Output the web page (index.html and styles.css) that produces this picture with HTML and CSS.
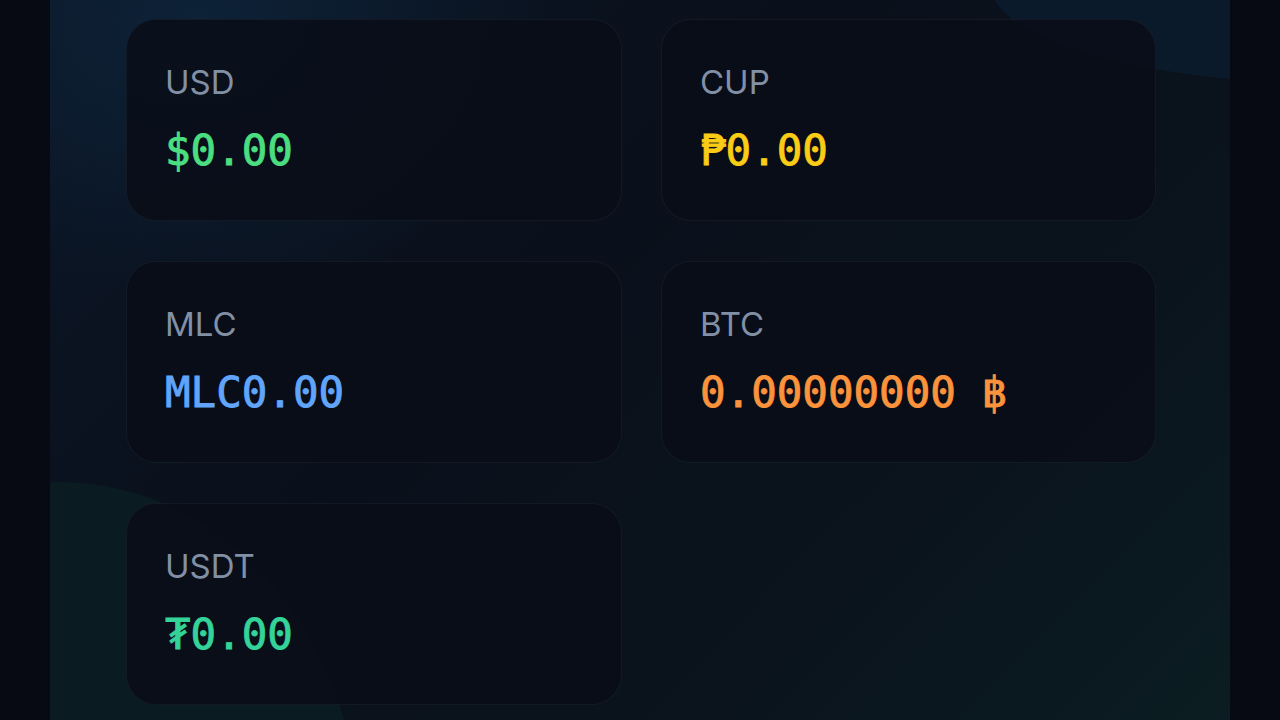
FILE: index.html
```html
<!DOCTYPE html>
<html lang="en">
<head>
<meta charset="utf-8">
<title>Balances</title>
<link rel="stylesheet" href="styles.css">
</head>
<body>
<main class="panel">
  <div class="blob blob-tl"></div>
  <div class="blob blob-tr"></div>
  <div class="blob blob-bl"></div>
  <section class="grid">
    <div class="card">
      <div class="label">USD</div>
      <div class="value usd">$0.00</div>
    </div>
    <div class="card">
      <div class="label">CUP</div>
      <div class="value cup">₱0.00</div>
    </div>
    <div class="card">
      <div class="label">MLC</div>
      <div class="value mlc">MLC0.00</div>
    </div>
    <div class="card">
      <div class="label">BTC</div>
      <div class="value btc">0.00000000 ฿</div>
    </div>
    <div class="card">
      <div class="label">USDT</div>
      <div class="value usdt">₮0.00</div>
    </div>
  </section>
</main>
</body>
</html>
```
FILE: styles.css
```css
html, body {
  margin: 0;
  padding: 0;
  height: 100%;
}
body {
  background: #070a12;
  font-family: Inter, "Liberation Sans", sans-serif;
  overflow: hidden;
}
.panel {
  position: relative;
  margin: 0 50px;
  height: 720px;
  overflow: hidden;
  background: linear-gradient(135deg, #0b1626 0%, #0a101b 40%, #0a141d 75%, #0b1d22 100%);
}
.blob {
  position: absolute;
  border-radius: 50%;
  pointer-events: none;
}
.blob-tl {
  left: -200px;
  top: -260px;
  width: 700px;
  height: 560px;
  background: radial-gradient(closest-side, rgba(14, 38, 62, 0.75), rgba(14, 38, 62, 0));
}
.blob-tr {
  left: 940px;
  top: -116px;
  width: 700px;
  height: 200px;
  background: #0b1a2a;
}
.blob-bl {
  left: -290px;
  top: 482px;
  width: 600px;
  height: 700px;
  background: #0b1b22;
}
.grid {
  position: relative;
  z-index: 1;
  width: 1030px;
  margin: 0 0 0 76px;
  padding-top: 19px;
  display: grid;
  grid-template-columns: 496px 495px;
  column-gap: 39px;
  row-gap: 40px;
}
.card {
  box-sizing: border-box;
  height: 202px;
  border-radius: 30px;
  border: 1px solid rgba(120, 140, 170, 0.09);
  background: rgba(9, 13, 23, 0.86);
  padding: 44px 38px 0;
}
.label {
  font-size: 33px;
  line-height: 36px;
  color: #8290a6;
}
.value {
  margin-top: 26px;
  font-family: "DejaVu Sans Mono", "Liberation Mono", monospace;
  font-size: 42.5px;
  line-height: 50px;
  font-weight: 400;
  -webkit-text-stroke: 0.9px currentColor;
}
.usd { color: #4ade80; }
.cup { color: #facc15; }
.mlc { color: #60a5fa; }
.btc { color: #fb923c; }
.usdt { color: #34d399; }
```
